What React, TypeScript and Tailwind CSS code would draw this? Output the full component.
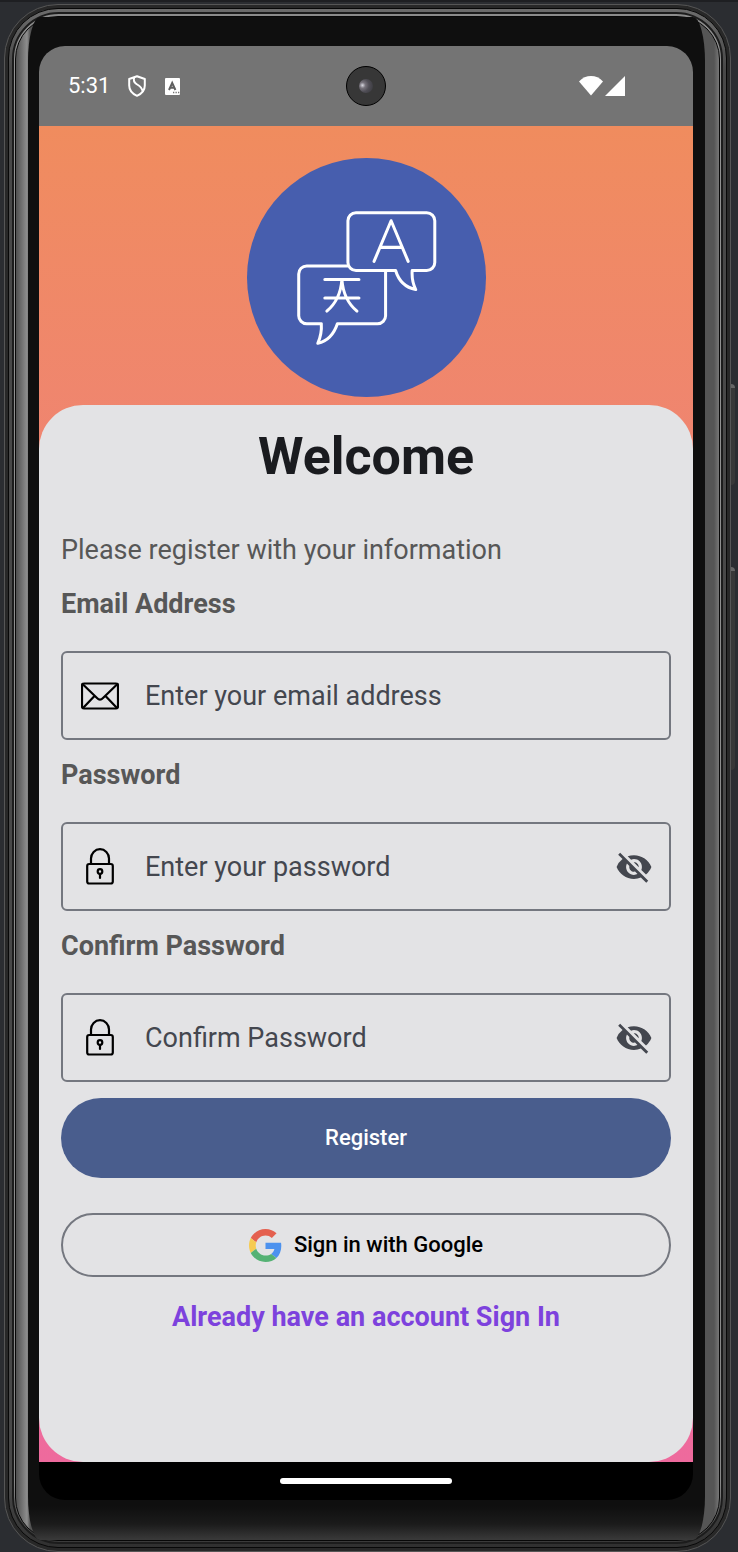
import { useState } from "react";
import type { ReactNode } from "react";
import { MdVisibility, MdVisibilityOff } from "react-icons/md";

function ShieldIcon() {
  return (
    <svg viewBox="0 0 18 22" className="h-[22px] w-[18px]" fill="none" stroke="white" strokeWidth="2" strokeLinejoin="round">
      <path d="M9 1.200 16.800 4v6.500c0 5-3.200 8.300-7.800 10.300C4.400 18.800 1.200 15.500 1.200 10.500V4Z" />
      <path d="M6.200 2.300c-1.200 3 0 5.200 3 7.200 3.400 2 5 4.500 5.600 7" />
    </svg>
  );
}

function KeyboardIcon() {
  return (
    <svg viewBox="0 0 15 17" className="h-[17px] w-[15px]">
      <rect width="15" height="17" rx="1" fill="white" />
      <path d="M4 12 7.200 5 10.400 12M5.300 9.800h3.800" fill="none" stroke="#606060" strokeWidth="2" />
      <path d="M8 14.500h1.300M10.500 14.500h1.300M13 14.500h1.300" stroke="#747474" strokeWidth="1.300" />
    </svg>
  );
}

function SignalIcons() {
  return (
    <svg viewBox="0 0 46 20" className="h-5 w-[46px]" fill="white">
      <path d="M0 5.500C3.500 1.800 7.500 0 12 0s8.500 1.800 12 5.500L12 19.500Z" />
      <path d="M46 0v20H26Z" />
    </svg>
  );
}

function TranslateLogo() {
  return (
    <svg viewBox="0 0 238 238" className="size-[239px]" role="img" aria-label="Translate">
      <circle cx="119" cy="119" r="119" fill="#475eae" />
      <g fill="none" stroke="white" strokeWidth="3" strokeLinecap="round" strokeLinejoin="round">
        <path d="M108.500 54.500H179a8 8 0 0 1 8 8V104a8 8 0 0 1-8 8H164.500c-.5 7 .5 13 3.500 19-10-2-17-9-20-19H108.500a8 8 0 0 1-8-8V62.500a8 8 0 0 1 8-8Z" />
        <path d="M100 107.500H59.500a8 8 0 0 0-8 8V157a8 8 0 0 0 8 8H74c.5 7-.5 13-3.500 19.500 9-2 16-9 19.500-19.500H130a8 8 0 0 0 8-8v-44" />
        <path d="M126.500 103 143.500 62.500 160.500 103M133 89h21" />
        <path d="M77.500 121h34M77.500 139.500h34M94.500 121c-1 14-6 24-15 31.500M94.500 121c1 14 6 24 15 31.500" />
      </g>
    </svg>
  );
}

function MailIcon() {
  return (
    <svg viewBox="0 0 38 28" className="h-7 w-[38px]" fill="none" stroke="black" strokeWidth="2.200" strokeLinecap="round" strokeLinejoin="round">
      <rect x="1" y="1.500" width="36" height="25" rx="2" />
      <path d="M1.500 2 16 16q3 3 6 0L36.500 2M2 26 13.500 14M36 26 24.500 14" />
    </svg>
  );
}

function LockIcon() {
  return (
    <svg viewBox="0 0 28 37" className="h-[37px] w-7" fill="none" stroke="black" strokeWidth="2.200" strokeLinecap="round" strokeLinejoin="round">
      <rect x="1.200" y="16" width="25.600" height="19.500" rx="2" />
      <path d="M5 16v-5.500a9 9.300 0 0 1 18 0V16" />
      <circle cx="14" cy="23.500" r="2.300" />
      <path d="M14 26v4" />
    </svg>
  );
}

function GoogleIcon() {
  return (
    <svg viewBox="0 0 48 48" className="size-[33px] shrink-0">
      <path fill="#e4604f" d="M24 9.500c3.540 0 6.710 1.220 9.210 3.600l6.850-6.850C35.900 2.380 30.470 0 24 0 14.620 0 6.510 5.380 2.560 13.220l7.980 6.190C12.430 13.720 17.740 9.500 24 9.500z" />
      <path fill="#4d92ee" d="M46.980 24.550c0-1.570-.15-3.090-.38-4.550H24v9.020h12.940c-.58 2.960-2.260 5.480-4.780 7.180l7.730 6c4.510-4.180 7.090-10.360 7.090-17.650z" />
      <path fill="#f6cb52" d="M10.530 28.590c-.48-1.450-.76-2.990-.76-4.590s.27-3.140.76-4.590l-7.980-6.190C.92 16.460 0 20.120 0 24c0 3.880.92 7.540 2.560 10.780l7.970-6.190z" />
      <path fill="#55b274" d="M24 48c6.480 0 11.930-2.130 15.890-5.810l-7.730-6c-2.150 1.450-4.920 2.300-8.160 2.300-6.260 0-11.570-4.220-13.470-9.910l-7.980 6.190C6.510 42.620 14.620 48 24 48z" />
    </svg>
  );
}

interface FieldProps {
  id: string;
  label: string;
  placeholder: string;
  icon: ReactNode;
  secret?: boolean;
}

function Field({ id, label, placeholder, icon, secret = false }: FieldProps) {
  const [visible, setVisible] = useState(false);
  return (
    <div className="flex flex-col">
      <label htmlFor={id} className="text-[27px] leading-8 font-bold text-[#575757]">
        {label}
      </label>
      <div className="mt-[31px] flex h-[89px] items-center rounded-md border-2 border-[#74777f] px-4">
        <span className="flex w-[42px] shrink-0 justify-center">{icon}</span>
        <input
          id={id}
          type={secret ? (visible ? "text" : "password") : "email"}
          placeholder={placeholder}
          className="ml-6 min-w-0 flex-1 bg-transparent text-[27px] leading-8 text-[#44474f] outline-none placeholder:text-[#44474f]"
        />
        {secret && (
          <button
            type="button"
            aria-label={visible ? "Hide password" : "Show password"}
            onClick={() => setVisible(!visible)}
            className="shrink-0 text-[#44474f]"
          >
            {visible ? <MdVisibility className="size-[38px]" /> : <MdVisibilityOff className="size-[38px]" />}
          </button>
        )}
      </div>
    </div>
  );
}

function StatusBar() {
  return (
    <header className="relative flex h-20 items-center justify-between bg-[#747474] pr-[68px] pl-[29px]">
      <div className="flex items-center">
        <span className="text-[22px] leading-8 text-white">5:31</span>
        <span className="ml-[18px]"><ShieldIcon /></span>
        <span className="ml-[19px]"><KeyboardIcon /></span>
      </div>
      <div className="absolute top-5 left-1/2 flex size-10 -translate-x-1/2 items-center justify-center rounded-full border border-black bg-[#373737]">
        <span className="size-3.5 rounded-full bg-[radial-gradient(circle_at_25%_45%,#d8d8e0_0%,#77737c_22%,#504e56_50%,#343438_100%)]" />
      </div>
      <SignalIcons />
    </header>
  );
}

function RegisterCard() {
  return (
    <main className="flex flex-1 flex-col rounded-[44px] bg-[#e3e3e5] px-[22px] pt-5 pb-8">
      <h1 className="text-center text-[52px] leading-16 font-bold text-[#1a1b1f]">Welcome</h1>
      <form className="mt-[45px] flex flex-col" onSubmit={(event) => event.preventDefault()}>
        <p className="text-[27px] leading-8 text-[#575757]">Please register with your information</p>
        <div className="mt-[22px] flex flex-col gap-[19px]">
          <Field id="email" label="Email Address" placeholder="Enter your email address" icon={<MailIcon />} />
          <Field id="password" label="Password" placeholder="Enter your password" icon={<LockIcon />} secret />
          <Field id="confirm" label="Confirm Password" placeholder="Confirm Password" icon={<LockIcon />} secret />
        </div>
        <button type="submit" className="mt-4 h-20 rounded-full bg-[#495d8d] text-[22px] leading-8 font-medium text-white">
          Register
        </button>
        <button
          type="button"
          className="mt-[35px] flex h-16 items-center justify-center gap-3 rounded-full border-2 border-[#74777f] text-[22px] leading-8 font-medium text-black"
        >
          <GoogleIcon />
          Sign in with Google
        </button>
      </form>
      <a href="#sign-in" className="mt-6 self-center text-[27px] leading-8 font-bold text-[#7d42dd]">
        Already have an account Sign In
      </a>
    </main>
  );
}

function Screen() {
  return (
    <div className="flex flex-1 flex-col overflow-hidden rounded-[26px] bg-black">
      <StatusBar />
      <div className="flex flex-1 flex-col bg-linear-to-b from-[#f08c5e] to-[#ee6a9d]">
        <div className="flex justify-center pt-8 pb-2">
          <TranslateLogo />
        </div>
        <RegisterCard />
      </div>
      <footer className="flex h-[38px] items-center justify-center">
        <span className="h-1.5 w-[172px] rounded-full bg-white" />
      </footer>
    </div>
  );
}

export default function App() {
  return (
    <div className="flex min-h-screen flex-col border-t-2 border-[#1e1f22] bg-[#2b2d31] pt-0.5 pr-[7px] pl-1 font-[Roboto,sans-serif]">
      <div className="relative flex flex-1 flex-col rounded-[54px] border border-[#565656] bg-[#282828] p-[3px]">
        <div className="absolute top-[379px] -right-[5px] h-[101px] w-1 rounded-r-sm border-t-4 border-[#666666] bg-[#383838]" />
        <div className="absolute top-[562px] -right-[5px] h-[203px] w-1 rounded-r-sm border-t-4 border-[#666666] bg-[#383838]" />
        <div className="flex flex-1 flex-col rounded-[50px] border border-[#080808] bg-[linear-gradient(to_bottom,#6c6c6c_0px,#484848_60px,#484848_calc(100%-60px),#303030_100%)] p-[3px]">
          <div className="flex flex-1 flex-col rounded-[47px] border-2 border-[#1c1c1c] bg-[linear-gradient(to_bottom,#8c8c8c_0px,#929292_60px,#888888_calc(100%-60px),#3a3a3a_100%)] p-px pt-0.5">
            <div className="flex flex-1 flex-col rounded-[43px] border border-[#080808] bg-[linear-gradient(to_right,#505050_0px,#8e8e8e_11px,#555555_14px,#555555_calc(100%-5px),#777777_100%)] pr-3.5 pl-3">
              <div className="flex flex-1 flex-col rounded-[12px/44px] bg-[linear-gradient(to_top,#3a3a3a_0px,#1b1b1b_16px,#0f0f0f_34px)] pt-[29px] pr-3 pb-10 pl-[11px]">
                <Screen />
              </div>
            </div>
          </div>
        </div>
      </div>
    </div>
  );
}
